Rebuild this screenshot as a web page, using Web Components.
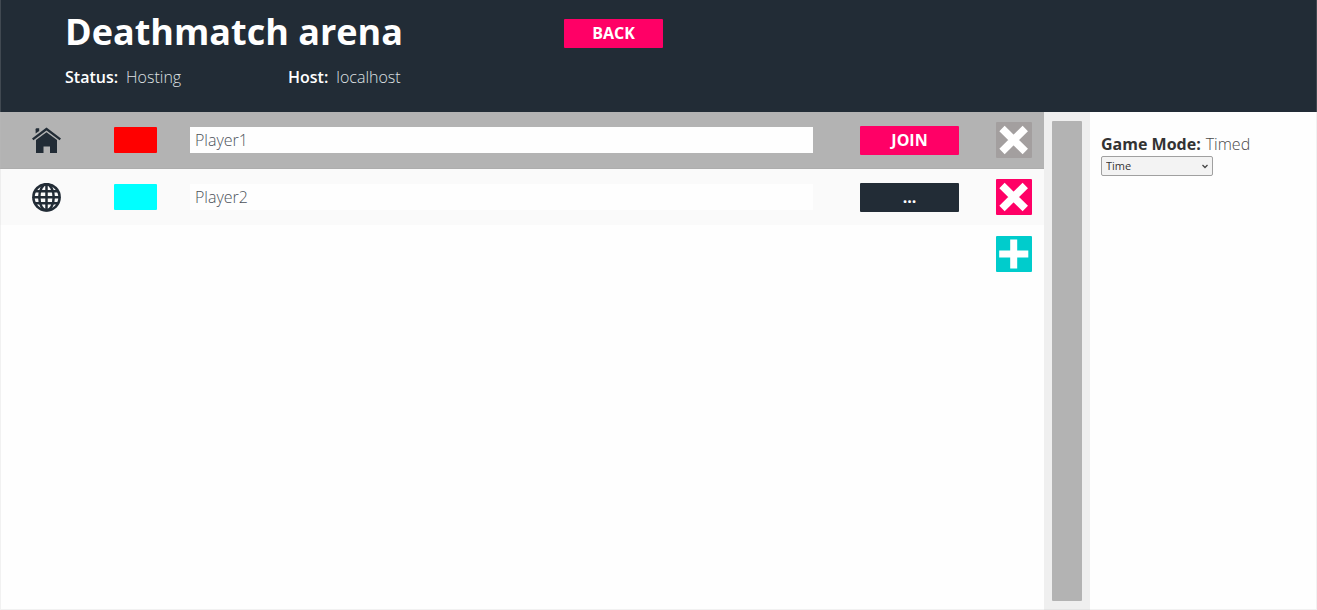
<!DOCTYPE html>
<html lang="en">
<head>
<meta charset="utf-8">
<title>Deathmatch arena</title>
<style>
html, body { margin: 0; height: 100%; }
body { font: 300 16px/24px "Open Sans", "Noto Sans", sans-serif; color: #333; background: #fefefe; --dark: #222c36; --pink: #ff0066; --teal: #00cccc; --grey: #b3b3b3; }
</style>
</head>
<body>
<lobby-app></lobby-app>

<template id="lobby-app">
<style>
:host { display: flex; flex-direction: column; min-height: 100vh; position: relative; }
:host::after { content: ""; position: absolute; inset: -1px 0 0; pointer-events: none; box-shadow: inset 0 0 0 1px rgba(190, 190, 190, .2); }
main { flex: 1; display: grid; grid-template-columns: 1fr 46px 227px; }
</style>
<lobby-header name="Deathmatch arena" status="Hosting" host="localhost"></lobby-header>
<main>
  <player-list>
    <player-row kind="local" name="Player1" colour="#ff0000" action="JOIN" active></player-row>
    <player-row kind="remote" name="Player2" colour="#00ffff" action="..."></player-row>
  </player-list>
  <scroll-rail></scroll-rail>
  <game-settings mode="Timed"></game-settings>
</main>
</template>

<template id="lobby-header">
<style>
:host { display: block; background: var(--dark); color: #fff; }
header { box-sizing: border-box; min-height: 112px; padding: 8px 16px 0 65px; display: grid; grid-template-columns: 223px 276px auto; grid-template-rows: 50px auto; justify-content: start; }
h1 { margin: 0; grid-column: 1 / 3; font-size: 36px; line-height: 48px; font-weight: 700; white-space: nowrap; }
text-button { align-self: center; }
p { margin: 0; padding-top: 7px; }
b { font-weight: 600; margin-right: 8px; }
span { color: #dfe1e3; }
</style>
<header>
  <h1></h1>
  <text-button>BACK</text-button>
  <p><b>Status:</b><span id="status"></span></p>
  <p><b>Host:</b><span id="host"></span></p>
</header>
</template>

<template id="text-button">
<style>
:host { display: block; width: 99px; }
button { display: block; width: 100%; height: 29px; margin: 0; padding: 0; border: 0; border-radius: 1px; background: var(--pink); color: #fff; font: 700 16px/29px "Open Sans", "Noto Sans", sans-serif; cursor: pointer; }
:host([tone="dark"]) button { background: var(--dark); }
</style>
<button type="button"><slot></slot></button>
</template>

<template id="icon-button">
<style>
:host { display: block; width: 36px; }
button { display: block; width: 36px; height: 36px; margin: 0; padding: 0; border: 0; border-radius: 1px; background: var(--pink); cursor: pointer; }
button:disabled { background: #a39f9f; cursor: default; }
:host([icon="plus"]) button { background: var(--teal); }
svg { display: block; stroke: #fff; stroke-width: 7; }
:host([icon="cross"]) .plus, :host([icon="plus"]) .cross { display: none; }
</style>
<button type="button">
  <svg width="36" height="36" viewBox="0 0 36 36">
    <path class="cross" stroke-width="7.600" d="M6 6.500L29.300 29.500M29.300 6.500L6 29.500"/>
    <path class="plus" d="M17.700 3.500V32.500M3.200 18H32.300"/>
  </svg>
</button>
</template>

<template id="player-list">
<style>
:host { display: block; }
.add { display: flex; justify-content: flex-end; padding: 11px 12px 0 0; }
</style>
<slot></slot>
<div class="add"><icon-button icon="plus" label="Add player"></icon-button></div>
</template>

<template id="player-row">
<style>
:host { box-sizing: border-box; display: grid; grid-template-columns: 82px 76px 1fr 136px 36px; align-items: center; height: 56px; padding: 0 12px 0 32px; background: #fafafa; }
:host([active]) { background: var(--grey); height: 57px; border-bottom: 1px solid #adadad; }
.kind { display: block; fill: var(--dark); }
input { box-sizing: border-box; display: block; margin: 0; border: 0; }
.colour { appearance: none; width: 43px; height: 26px; padding: 0; border-radius: 1px; overflow: hidden; }
.colour::-webkit-color-swatch-wrapper { padding: 0; }
.colour::-webkit-color-swatch { border: 0; border-radius: 0; }
.namebox { padding-right: 47px; }
.name { width: 100%; height: 26px; padding: 0 5px; background: #fefefe; color: #4c525a; font: 300 16px/26px "Open Sans", "Noto Sans", sans-serif; }
:host([kind="local"]) .globe, :host([kind="remote"]) .home { display: none; }
</style>
<svg class="kind" width="29" height="29" viewBox="0 0 29 29" aria-hidden="true">
  <g class="home">
    <path d="M3.600 3.200Q3.600 2.200 4.600 2.200H7.200V5L3.600 7.600Z"/>
    <path d="M14.500 1.600L29 12.400L27.600 14.200L14.500 4.500L1.400 14.200L0 12.400Z"/>
    <path d="M14.500 6.300L25 14V27H18V20.500H11.500V27H4V14Z"/>
  </g>
  <g class="globe">
    <circle cx="14.500" cy="14.300" r="14.400"/>
    <circle cx="14.500" cy="14.300" r="11.800" fill="#fafafa"/>
    <g fill="none" stroke="#222c36" stroke-width="2.500">
      <ellipse cx="14.500" cy="14.300" rx="7.200" ry="13"/>
      <path d="M14.500 1V28M1 14.300H28M3 8.300H26M3 20.300H26"/>
    </g>
  </g>
</svg>
<input class="colour" type="color" aria-label="Player colour">
<div class="namebox"><input class="name" type="text" aria-label="Player name"></div>
<text-button></text-button>
<icon-button icon="cross" label="Remove player"></icon-button>
</template>

<template id="scroll-rail">
<style>
:host { display: flex; background: #efefef; padding: 9px 8px; }
div { flex: 1; background: var(--grey); border-radius: 1px; }
</style>
<div></div>
</template>

<template id="game-settings">
<style>
:host { display: block; padding: 20px 8px 8px 11px; }
label { display: block; }
b { font-weight: 700; margin-right: 5px; }
span { color: #4a4a4a; }
.pick { position: relative; width: 112px; }
select { appearance: none; box-sizing: border-box; display: block; width: 100%; height: 20px; margin: 0; padding: 0 4px; border: 1px solid #a0a0a0; border-radius: 2px; background: #f3f3f3; color: #333; font: 400 11px/18px "Open Sans", "Noto Sans", sans-serif; }
svg { position: absolute; right: 5px; top: 8px; fill: none; stroke: #444; stroke-width: 1.300; pointer-events: none; }
</style>
<label for="mode"><b>Game Mode:</b><span></span></label>
<div class="pick">
  <select id="mode"><option>Time</option></select>
  <svg width="6" height="5" viewBox="0 0 6 5"><path d="M.5 1L3 3.500L5.500 1"/></svg>
</div>
</template>

<script>
class Base extends HTMLElement {
  connectedCallback() {
    if (this.shadowRoot) return;
    const root = this.attachShadow({ mode: "open" });
    root.append(document.getElementById(this.localName).content.cloneNode(true));
    this.fill(root);
  }
  fill() {}
}
customElements.define("text-button", class extends Base {});
customElements.define("icon-button", class extends Base {
  fill(root) {
    const button = root.querySelector("button");
    button.setAttribute("aria-label", this.getAttribute("label"));
    button.disabled = this.hasAttribute("disabled");
  }
});
customElements.define("lobby-header", class extends Base {
  fill(root) {
    root.querySelector("h1").textContent = this.getAttribute("name");
    root.getElementById("status").textContent = this.getAttribute("status");
    root.getElementById("host").textContent = this.getAttribute("host");
  }
});
customElements.define("player-row", class extends Base {
  fill(root) {
    const active = this.hasAttribute("active");
    root.querySelector(".colour").value = this.getAttribute("colour");
    root.querySelector(".name").value = this.getAttribute("name");
    const action = root.querySelector("text-button");
    action.textContent = this.getAttribute("action");
    if (!active) action.setAttribute("tone", "dark");
    const remove = root.querySelector("icon-button");
    remove.toggleAttribute("disabled", active);
    if (remove.shadowRoot) remove.fill(remove.shadowRoot);
  }
});
customElements.define("player-list", class extends Base {});
customElements.define("scroll-rail", class extends Base {});
customElements.define("game-settings", class extends Base {
  fill(root) { root.querySelector("span").textContent = this.getAttribute("mode"); }
});
customElements.define("lobby-app", class extends Base {});
</script>
</body>
</html>
